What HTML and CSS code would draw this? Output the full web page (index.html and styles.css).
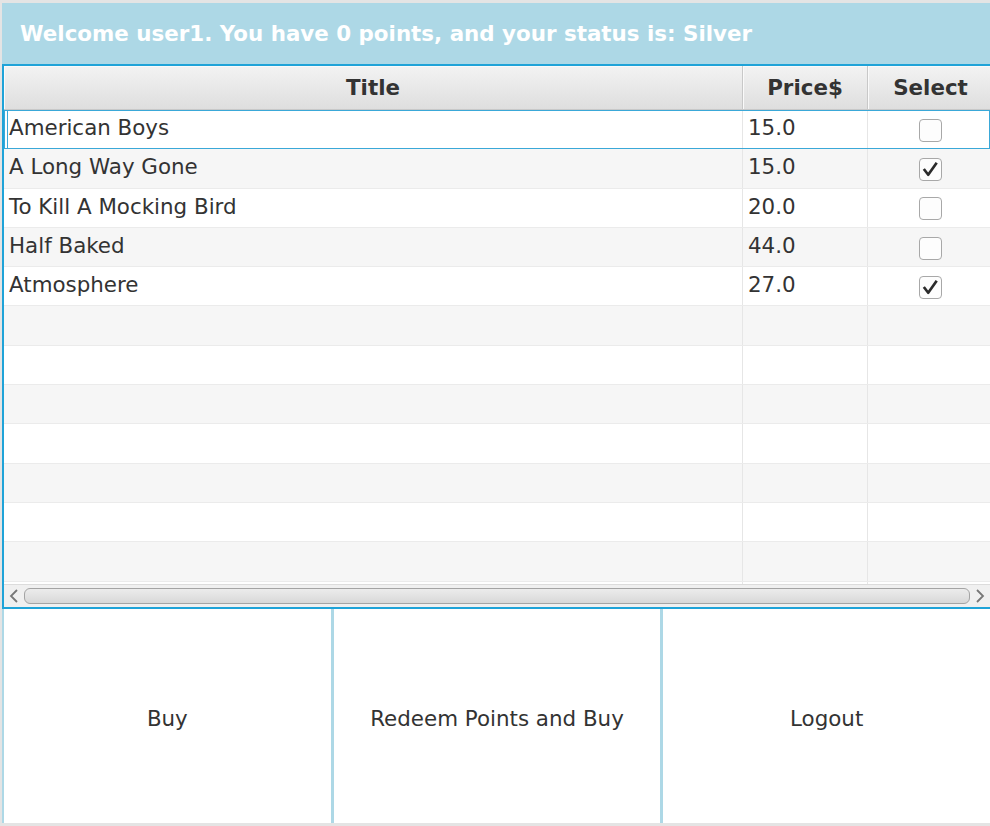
FILE: index.html
```html
<!DOCTYPE html>
<html>
<head>
<meta charset="utf-8">
<link rel="stylesheet" href="styles.css">
</head>
<body>
<div class="window">
  <div class="welcome">Welcome user1. You have 0 points, and your status is: Silver</div>
  <div class="table">
    <div class="thead">
      <div class="th c-title">Title</div>
      <div class="th c-price">Price$</div>
      <div class="th c-select">Select</div>
      <div class="th c-fill"></div>
    </div>
    <div class="tbody">
      <div class="row odd focused">
        <div class="td c-title">American Boys</div>
        <div class="td c-price">15.0</div>
        <div class="td c-select"><span class="cb"></span></div>
        <div class="td c-fill"></div>
      </div>
      <div class="row even">
        <div class="td c-title">A Long Way Gone</div>
        <div class="td c-price">15.0</div>
        <div class="td c-select"><span class="cb"><svg viewBox="0 0 22 22" width="22" height="22"><path d="M4 11 L8.6 17 L17.5 4.5" fill="none" stroke="#2b2b2b" stroke-width="2.8" stroke-linejoin="round"/></svg></span></div>
        <div class="td c-fill"></div>
      </div>
      <div class="row odd">
        <div class="td c-title">To Kill A Mocking Bird</div>
        <div class="td c-price">20.0</div>
        <div class="td c-select"><span class="cb"></span></div>
        <div class="td c-fill"></div>
      </div>
      <div class="row even">
        <div class="td c-title">Half Baked</div>
        <div class="td c-price">44.0</div>
        <div class="td c-select"><span class="cb"></span></div>
        <div class="td c-fill"></div>
      </div>
      <div class="row odd">
        <div class="td c-title">Atmosphere</div>
        <div class="td c-price">27.0</div>
        <div class="td c-select"><span class="cb"><svg viewBox="0 0 22 22" width="22" height="22"><path d="M4 11 L8.6 17 L17.5 4.5" fill="none" stroke="#2b2b2b" stroke-width="2.8" stroke-linejoin="round"/></svg></span></div>
        <div class="td c-fill"></div>
      </div>
      <div class="row even"><div class="td c-title"></div><div class="td c-price"></div><div class="td c-select"></div><div class="td c-fill"></div></div>
      <div class="row odd"><div class="td c-title"></div><div class="td c-price"></div><div class="td c-select"></div><div class="td c-fill"></div></div>
      <div class="row even"><div class="td c-title"></div><div class="td c-price"></div><div class="td c-select"></div><div class="td c-fill"></div></div>
      <div class="row odd"><div class="td c-title"></div><div class="td c-price"></div><div class="td c-select"></div><div class="td c-fill"></div></div>
      <div class="row even"><div class="td c-title"></div><div class="td c-price"></div><div class="td c-select"></div><div class="td c-fill"></div></div>
      <div class="row odd"><div class="td c-title"></div><div class="td c-price"></div><div class="td c-select"></div><div class="td c-fill"></div></div>
      <div class="row even"><div class="td c-title"></div><div class="td c-price"></div><div class="td c-select"></div><div class="td c-fill"></div></div>
      <div class="row odd"><div class="td c-title"></div><div class="td c-price"></div><div class="td c-select"></div><div class="td c-fill"></div></div>
    </div>
    <div class="hscroll">
      <div class="arrow left"><svg viewBox="0 0 12 16" width="12" height="16"><path d="M9 2 L3 8 L9 14" fill="none" stroke="#777" stroke-width="1.8"/></svg></div>
      <div class="track"><div class="thumb"></div></div>
      <div class="arrow right"><svg viewBox="0 0 12 16" width="12" height="16"><path d="M3 2 L9 8 L3 14" fill="none" stroke="#777" stroke-width="1.8"/></svg></div>
    </div>
  </div>
  <div class="buttons">
    <div class="btn">Buy</div>
    <div class="btn">Redeem Points and Buy</div>
    <div class="btn">Logout</div>
  </div>
</div>
</body>
</html>
```
FILE: styles.css
```css
html, body {
  margin: 0;
  padding: 0;
}
body {
  width: 990px;
  height: 826px;
  overflow: hidden;
  background: #e4e4e4;
  font-family: "DejaVu Sans", sans-serif;
  color: #333;
}
.window {
  margin: 3px 0 0 2px;
  width: 988px;
  height: 820px;
  background: #fff;
  display: flex;
  flex-direction: column;
}
.welcome {
  height: 61px;
  background: #add8e6;
  color: #fff;
  font-weight: bold;
  font-size: 21.4px;
  line-height: 62px;
  padding-left: 18px;
  box-sizing: border-box;
  white-space: nowrap;
}
.table {
  border: 2px solid #1fa3d8;
  border-right: none;
  display: flex;
  flex-direction: column;
  height: 545px;
  box-sizing: border-box;
  background: #fff;
  overflow: hidden;
}
.thead {
  display: flex;
  height: 44px;
  background: linear-gradient(#f3f3f3, #dedede);
  border-bottom: 1px solid #c8c8c8;
  box-sizing: border-box;
  flex: none;
}
.th {
  font-weight: bold;
  font-size: 21.4px;
  line-height: 43px;
  text-align: center;
  border-right: 1px solid #c8c8c8;
  box-shadow: inset 1px 1px 0 #fafafa;
  box-sizing: border-box;
  color: #333;
}
.c-title { width: 739px; flex: none; }
.c-price { width: 125px; flex: none; }
.c-select { width: 126px; flex: none; }
.c-fill { flex: 1; }
.th.c-fill { border-right: none; }
.tbody {
  flex: 1;
  overflow: hidden;
}
.row {
  display: flex;
  height: 39.3px;
  box-sizing: border-box;
  border-bottom: 1px solid #ebebeb;
}
.row.odd { background: #fff; }
.row.even { background: #f6f6f6; }
.row.focused {
  outline: 1px solid #3aa8d8;
  outline-offset: -1px;
}
.row.focused .c-title {
  box-shadow: inset 3px 0 0 #fff, inset 4px 0 0 #3aa8d8;
}
.td {
  font-size: 21.4px;
  line-height: 36px;
  padding-left: 5px;
  border-right: 1px solid #e6e6e6;
  box-sizing: border-box;
  white-space: nowrap;
  overflow: hidden;
}
.td.c-fill { border-right: none; }
.td.c-select {
  display: flex;
  align-items: center;
  justify-content: center;
  padding-left: 0;
}
.cb {
  width: 23px;
  height: 23px;
  border: 1px solid #a8a8a8;
  border-radius: 4px;
  box-sizing: border-box;
  background: #fdfdfd;
  display: flex;
  align-items: center;
  justify-content: center;
  margin-top: 2px;
}
.hscroll {
  flex: none;
  height: 22px;
  display: flex;
  align-items: center;
  background: #f0f0f0;
  border-top: 1px solid #dcdcdc;
}
.arrow {
  width: 20px;
  display: flex;
  justify-content: center;
  align-items: center;
  flex: none;
}
.track {
  flex: 1;
  height: 18px;
  display: flex;
  align-items: center;
}
.thumb {
  width: 100%;
  height: 16px;
  border: 1px solid #a4a4a4;
  border-radius: 6px;
  box-sizing: border-box;
  background: linear-gradient(#ececec, #d8d8d8);
}
.buttons {
  flex: 1;
  display: flex;
  border-left: 2px solid #add8e6;
}
.btn {
  flex: 1;
  display: flex;
  align-items: center;
  justify-content: center;
  font-size: 21.4px;
  color: #333;
  background: #fff;
  padding-top: 4px;
}
.btn + .btn {
  border-left: 3px solid #add8e6;
}
```
